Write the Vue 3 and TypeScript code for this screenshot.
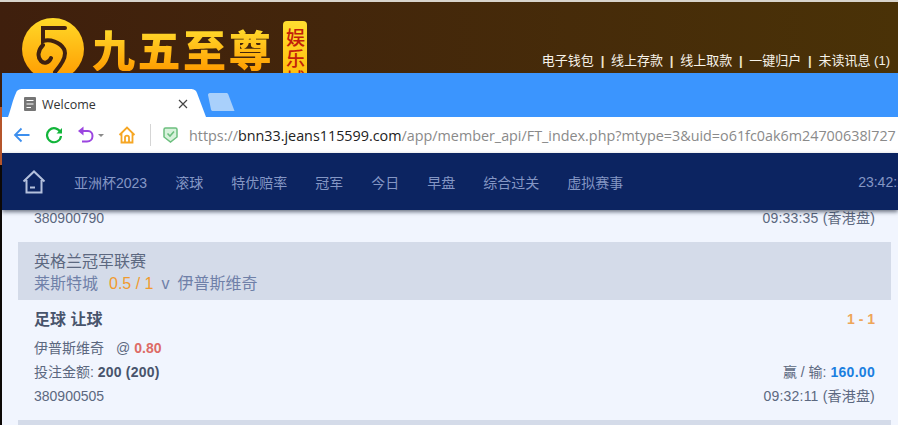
<script setup lang="ts">
const navItems: string[] = ['亚洲杯2023', '滚球', '特优赔率', '冠军', '今日', '早盘', '综合过关', '虚拟赛事']
const topLinks: string[] = ['电子钱包', '线上存款', '线上取款', '一键归户', '未读讯息 (1)']
</script>

<template>
  <div class="screen">
    <div class="site-head">
      <div class="logo">
        <svg class="logo-mark" width="62" height="62" viewBox="0 0 62 62">
          <defs>
            <linearGradient id="coin" x1="0" y1="0" x2="0" y2="1">
              <stop offset="0" stop-color="#ffd928" />
              <stop offset="1" stop-color="#ff9a00" />
            </linearGradient>
          </defs>
          <circle cx="31" cy="31" r="31" fill="url(#coin)" />
          <path d="M43 10H21V23C28 21 38 24 42 31C45 37 41 45 33 54M21 27C16 32 15 39 19 43C22 46 27 45 29 40" fill="none" stroke="#3f2010" stroke-width="4" stroke-linecap="round" />
        </svg>
        <span class="logo-name">九五至尊</span>
        <span class="logo-badge">娱乐城</span>
      </div>
      <div class="top-links">
        <template v-for="(link, i) in topLinks" :key="link">
          <span v-if="i > 0" class="pipe">|</span>
          <span>{{ link }}</span>
        </template>
      </div>
    </div>

    <div class="window">
      <div class="tab-bar">
        <div class="tab">
          <svg class="tab-shape" width="198" height="28" viewBox="0 0 198 28">
            <path d="M0 28C3 20 5 10 8 4C9 1 11 0 15 0H182C186 0 188 1 189 4L198 28Z" fill="#fff" />
          </svg>
          <svg class="doc-icon" width="12" height="14" viewBox="0 0 12 14">
            <rect width="12" height="14" rx="1" fill="#757575" />
            <path d="M2.500 3.500H9.500M2.500 7H9.500M2.500 10.500H7" stroke="#fff" stroke-width="1.200" />
          </svg>
          <span class="tab-title">Welcome</span>
          <svg class="tab-close" width="10" height="10" viewBox="0 0 10 10">
            <path d="M1 1L9 9M9 1L1 9" stroke="#444" stroke-width="1.200" />
          </svg>
        </div>
        <svg class="new-tab" width="28" height="18" viewBox="0 0 28 18">
          <path d="M1 2C1 1 1.500 0 3 0H19C20.500 0 21 .5 21.500 2L27.500 18H6C5 18 4.500 17.500 4 16.500Z" fill="#a9d0fb" />
        </svg>
      </div>

      <div class="toolbar">
        <svg class="tool back" width="18" height="18" viewBox="0 0 18 18">
          <path d="M16.500 9H2M8.500 2.500L2 9L8.500 15.500" fill="none" stroke="#3d8fee" stroke-width="1.800" />
        </svg>
        <svg class="tool reload" width="18" height="18" viewBox="0 0 18 18">
          <path d="M15.500 6.500A7 7 0 1 0 16 10" fill="none" stroke="#12b53a" stroke-width="2.200" />
          <path d="M11.500 7.500H17V2Z" fill="#12b53a" />
        </svg>
        <svg class="tool undo" width="17" height="18" viewBox="0 0 17 18">
          <path d="M5 5H11C14 5 15.500 7.500 15.500 10C15.500 13 13.500 15.500 10 15.500H5" fill="none" stroke="#9b45e0" stroke-width="2" />
          <path d="M6.500 .5V9.500L1 5Z" fill="#9b45e0" />
        </svg>
        <span class="caret"></span>
        <svg class="tool home-tool" width="18" height="18" viewBox="0 0 18 18">
          <path d="M1.500 9L9 1.500L16.500 9M3.500 7.500V16.500H14.500V7.500M7 16.500V11.500C7 9 11 9 11 11.500V16.500" fill="none" stroke="#f6a623" stroke-width="1.800" />
        </svg>
        <span class="divider"></span>
        <svg class="shield" width="15" height="16" viewBox="0 0 15 16">
          <path d="M1 2.500Q1 1 2.500 1H12.500Q14 1 14 2.500V10L7.500 15L1 10Z" fill="#d8f2dc" stroke="#6cbf7e" stroke-width="1.500" />
          <path d="M4.500 6.500L7 9L11 4.500" fill="none" stroke="#6cbf7e" stroke-width="1.600" />
        </svg>
        <div class="url"><span class="dim">https://</span><span class="host">bnn33.jeans115599.com</span><span class="dim">/app/member_api/FT_index.php?mtype=3&amp;uid=o61fc0ak6m24700638l727</span></div>
      </div>

      <nav class="nav">
        <svg class="nav-home" width="24" height="24" viewBox="0 0 24 24">
          <path d="M1.500 11.500L12 1.500L22.500 11.500M4.500 10V22.500H19.500V10M8 17.500H13" fill="none" stroke="#b4c0dc" stroke-width="2" />
        </svg>
        <span v-for="item in navItems" :key="item" class="nav-item">{{ item }}</span>
        <span class="nav-time">23:42:11</span>
      </nav>

      <main class="content">
        <div class="row-end first-end">
          <span>380900790</span>
          <span class="stamp">09:33:35 (香港盘)</span>
        </div>

        <section class="group-head">
          <div class="league">英格兰冠军联赛</div>
          <div class="match">
            <span>莱斯特城</span>
            <b class="handicap">0.5 / 1</b>
            <span class="versus">v</span>
            <span>伊普斯维奇</span>
          </div>
        </section>

        <section class="bet">
          <div class="bet-line title-line">
            <strong class="bet-title">足球 让球</strong>
            <b class="score">1 - 1</b>
          </div>
          <div class="bet-line odds-line">
            <span>伊普斯维奇<span class="at">@</span><b class="odds">0.80</b></span>
          </div>
          <div class="bet-line amount-line">
            <span>投注金额: <b>200 (200)</b></span>
            <span>赢 / 输: <b class="profit">160.00</b></span>
          </div>
          <div class="bet-line id-line">
            <span>380900505</span>
            <span class="stamp">09:32:11 (香港盘)</span>
          </div>
        </section>

        <section class="group-head"></section>
      </main>
    </div>
  </div>
</template>

<style>
html, body {
  margin: 0;
  overflow: hidden;
  background: #0c0806;
}
</style>

<style scoped>
.screen {
  width: 898px;
  height: 425px;
  overflow: hidden;
  font-family: "Liberation Sans", "Noto Sans CJK SC", sans-serif;
  background: linear-gradient(to bottom, #3f1f0d 107px, #b5552b 107px, #b5552b 165px, #0c0806 165px);
}

.site-head {
  height: 73px;
  box-sizing: border-box;
  border-top: 2px solid #d8d4cc;
  display: flex;
  justify-content: space-between;
  align-items: flex-end;
  overflow: hidden;
  background: linear-gradient(to right, #3f1f0d, #4a3207);
}

.logo {
  display: flex;
  align-items: flex-start;
  padding: 16px 0 0 22px;
  height: 55px;
}

.logo-mark {
  flex: none;
}

.logo-name {
  margin: 7px 0 0 8px;
  width: 186px;
  font-family: "Noto Sans CJK SC", sans-serif;
  font-size: 43px;
  font-weight: 900;
  line-height: 46px;
  letter-spacing: 2.500px;
  white-space: nowrap;
  background: linear-gradient(to bottom, #ffe030, #ff9c00);
  -webkit-background-clip: text;
  background-clip: text;
  color: transparent;
}

.logo-badge {
  margin: 3px 0 0 5px;
  width: 24px;
  height: 76px;
  border-radius: 4px;
  background: linear-gradient(to bottom, #ffdf30, #ffb000);
  color: #c2200a;
  font-family: "Noto Sans CJK SC", sans-serif;
  font-size: 19px;
  font-weight: 500;
  line-height: 24px;
  text-align: center;
  writing-mode: vertical-rl;
  letter-spacing: 2px;
}

.top-links {
  display: flex;
  padding: 0 8px 3px 0;
  color: #f7f3ea;
  font-size: 13px;
  line-height: 18px;
  white-space: nowrap;
}

.pipe {
  margin: 0 6.750px;
  color: #efe4c8;
  font-weight: 700;
}

.window {
  margin-left: 2px;
  height: 352px;
  background: #f1f5fe;
  overflow: hidden;
}

.tab-bar {
  height: 44px;
  box-sizing: border-box;
  padding: 16px 0 0 6px;
  display: flex;
  background: #3b95fe;
}

.tab {
  position: relative;
  width: 198px;
  height: 28px;
  flex: none;
  box-sizing: border-box;
  padding: 2px 0 0 16px;
  display: flex;
  align-items: center;
}

.tab-shape {
  position: absolute;
  left: 0;
  top: 0;
}

.doc-icon,
.tab-title,
.tab-close {
  position: relative;
}

.tab-title {
  margin-left: 6px;
  width: 136px;
  font-family: "Open Sans", sans-serif;
  font-size: 12.500px;
  color: #333;
}

.new-tab {
  margin: 4px 0 0 1px;
}

.toolbar {
  height: 36px;
  box-sizing: border-box;
  padding-left: 11px;
  display: flex;
  align-items: center;
  background: #fff;
  white-space: nowrap;
  overflow: hidden;
}

.tool {
  flex: none;
}

.reload {
  margin-left: 14px;
}

.undo {
  margin-left: 14px;
}

.caret {
  margin-left: 4px;
  border-top: 3px solid #8a8a8a;
  border-left: 3px solid transparent;
  border-right: 3px solid transparent;
}

.home-tool {
  margin-left: 14px;
}

.divider {
  margin-left: 14px;
  width: 1px;
  height: 22px;
  background: #d5d5d5;
  flex: none;
}

.shield {
  margin-left: 12px;
  flex: none;
}

.url {
  margin-left: 11px;
  font-family: "Open Sans", sans-serif;
  font-size: 14.350px;
}

.dim {
  color: #8a8a8a;
}

.host {
  color: #222;
}

.nav {
  height: 57px;
  box-sizing: border-box;
  padding-left: 20px;
  display: flex;
  align-items: center;
  gap: 28px;
  background: #0c2461;
  box-shadow: 0 2px 4px rgba(20, 30, 50, .6);
  position: relative;
  color: #8496c4;
  font-size: 14px;
  white-space: nowrap;
}

.nav-home {
  flex: none;
}

.nav-time {
  margin-left: 207px;
}

.content {
  padding: 0 7px 0 16px;
  color: #5c6880;
  font-size: 14px;
}

.row-end {
  display: flex;
  justify-content: space-between;
  padding: 0 16px;
}

.first-end {
  height: 32px;
  line-height: 16px;
}

.stamp {
  letter-spacing: .2px;
}

.group-head {
  height: 58px;
  box-sizing: border-box;
  padding: 10px 16px 0;
  background: #d4dbe9;
}

.league {
  font-size: 16px;
  line-height: 19px;
  color: #5c6880;
}

.match {
  margin-top: 3px;
  font-size: 16px;
  line-height: 19px;
  color: #6f80a8;
  display: flex;
  gap: 8px;
}

.handicap {
  font-weight: 400;
  color: #f09a2e;
  margin-left: 3px;
}

.bet {
  height: 120px;
  box-sizing: border-box;
  padding: 3px 16px 0;
}

.bet-line {
  display: flex;
  justify-content: space-between;
}

.title-line {
  height: 30px;
  align-items: center;
}

.bet-title {
  font-size: 16px;
  color: #48546c;
}

.score {
  margin-top: 2px;
  color: #eea65a;
  font-size: 14px;
}

.odds-line {
  margin-top: 6px;
  height: 24px;
  line-height: 18px;
}

.at {
  margin: 0 0 0 12px;
}

.odds {
  margin-left: 4px;
  color: #dd6b66;
}

.amount-line {
  height: 24px;
  line-height: 18px;
}

.amount-line b {
  color: #48546c;
  letter-spacing: .2px;
}

.amount-line .profit {
  color: #1a7fe0;
  letter-spacing: .3px;
}

.id-line {
  height: 24px;
  line-height: 18px;
}
</style>
